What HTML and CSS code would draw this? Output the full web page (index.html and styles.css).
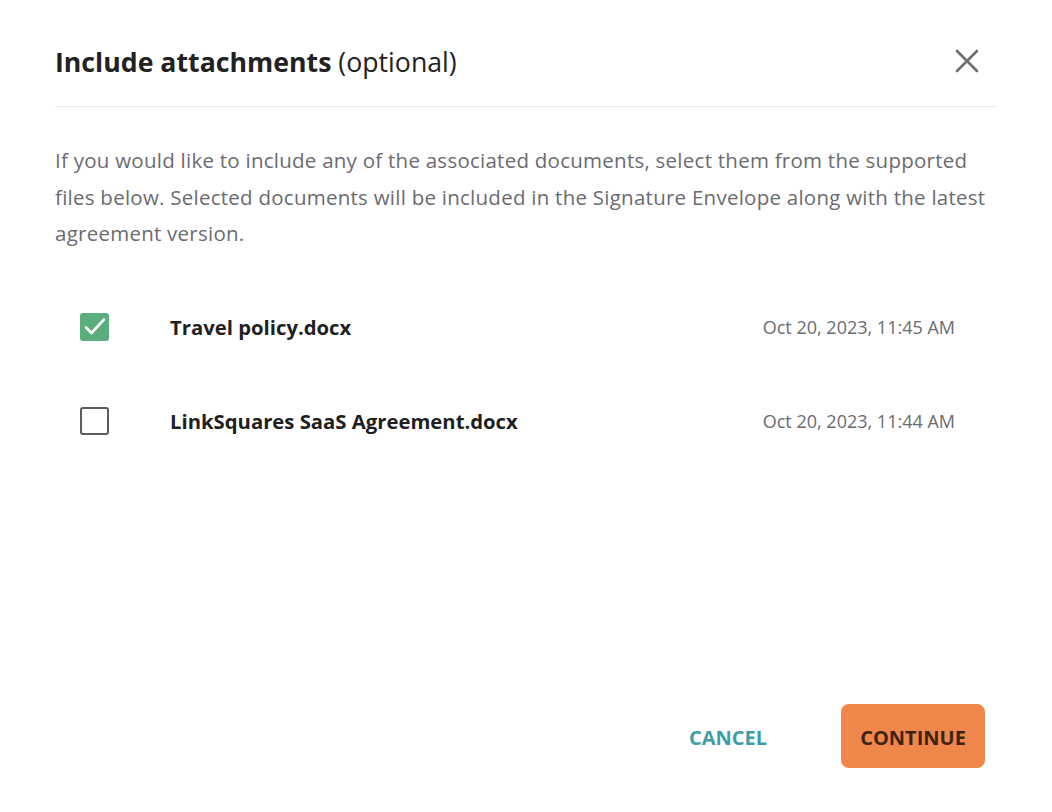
FILE: index.html
```html
<!DOCTYPE html>
<html lang="en">
<head>
<meta charset="utf-8">
<title>Include attachments</title>
<link rel="stylesheet" href="styles.css">
</head>
<body>
<div class="dialog">
  <header class="dialog-header">
    <h1 class="title"><strong>Include attachments</strong> <span class="optional">(optional)</span></h1>
    <button class="close" aria-label="Close">
      <svg width="24" height="24" viewBox="0 0 24 24"><path d="M2 2 L22 22 M22 2 L2 22" stroke="#6e6e6e" stroke-width="2.6" stroke-linecap="round" fill="none"/></svg>
    </button>
  </header>
  <p class="intro">If you would like to include any of the associated documents, select them from the supported files below. Selected documents will be included in the Signature Envelope along with the latest agreement version.</p>
  <ul class="files">
    <li class="file">
      <span class="check checked">
        <svg width="28" height="28" viewBox="0 0 28 28"><path d="M5 14.5 L10.5 20 L23 6.5" stroke="#fff" stroke-width="2.6" fill="none" stroke-linecap="round" stroke-linejoin="round"/></svg>
      </span>
      <span class="name">Travel policy.docx</span>
      <span class="date">Oct 20, 2023, 11:45 AM</span>
    </li>
    <li class="file">
      <span class="check"></span>
      <span class="name">LinkSquares SaaS Agreement.docx</span>
      <span class="date">Oct 20, 2023, 11:44 AM</span>
    </li>
  </ul>
  <footer class="actions">
    <button class="btn-cancel">CANCEL</button>
    <button class="btn-continue">CONTINUE</button>
  </footer>
</div>
</body>
</html>
```
FILE: styles.css
```css
html, body {
  margin: 0;
  padding: 0;
  background: #fff;
}
body {
  font-family: "Open Sans", "Noto Sans", sans-serif;
  color: #222;
}
.dialog {
  width: 1052px;
  height: 812px;
  box-sizing: border-box;
  padding: 0 55px;
  display: flex;
  flex-direction: column;
}
.dialog-header {
  display: flex;
  align-items: center;
  justify-content: space-between;
  height: 107px;
  border-bottom: 1px solid #e8e8e8;
  box-sizing: border-box;
  padding-top: 17px;
}
.title {
  margin: 0;
  font-size: 26.7px;
  font-weight: 400;
  color: #222;
}
.title strong {
  font-weight: 700;
}
.close {
  border: 0;
  background: none;
  padding: 0;
  margin-right: 18px;
  margin-top: -2px;
  width: 24px;
  height: 24px;
  cursor: pointer;
}
.close svg { display: block; }
.intro {
  margin: 35px 0 0;
  font-size: 20.5px;
  letter-spacing: 0.25px;
  line-height: 36.5px;
  color: #6b6b70;
}
.files {
  list-style: none;
  margin: 28px 0 0;
  padding: 0 42px 0 25px;
}
.file {
  display: flex;
  align-items: center;
  height: 94px;
}
.check {
  width: 29px;
  height: 28px;
  box-sizing: border-box;
  border: 2.5px solid #5b5b62;
  border-radius: 3px;
  display: flex;
  align-items: center;
  justify-content: center;
  flex: none;
}
.check.checked {
  background: #5aad7c;
  border: 0;
}
.check svg { display: block; }
.name {
  margin-left: 61px;
  font-size: 20.3px;
  font-weight: 700;
  color: #1f1f1f;
  flex: 1;
}
.date {
  font-size: 18px;
  color: #6b6b73;
}
.actions {
  margin-top: auto;
  margin-bottom: 44px;
  display: flex;
  align-items: center;
  justify-content: flex-end;
  gap: 54px;
}
.btn-cancel, .btn-continue {
  font-family: "Open Sans", "Noto Sans", sans-serif;
  font-weight: 700;
  font-size: 20px;
  border: 0;
  cursor: pointer;
}
.btn-cancel {
  background: none;
  color: #3f9ea5;
  padding: 0 20px;
  margin-top: 2px;
}
.btn-continue {
  background: #f0874a;
  color: #3d2410;
  height: 64px;
  width: 144px;
  border-radius: 8px;
  padding: 2px 0 0;
  margin-right: 12px;
}
```
